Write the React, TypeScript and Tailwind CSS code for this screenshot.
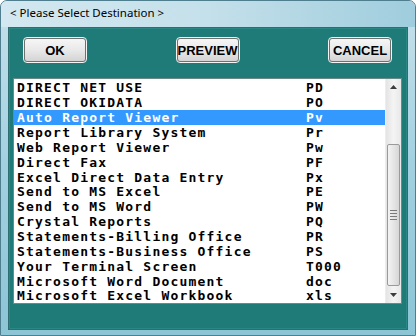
const destinations: [string, string][] = [
  ["DIRECT NET USE", "PD"],
  ["DIRECT OKIDATA", "PO"],
  ["Auto Report Viewer", "Pv"],
  ["Report Library System", "Pr"],
  ["Web Report Viewer", "Pw"],
  ["Direct Fax", "PF"],
  ["Excel Direct Data Entry", "Px"],
  ["Send to MS Excel", "PE"],
  ["Send to MS Word", "PW"],
  ["Crystal Reports", "PQ"],
  ["Statements-Billing Office", "PR"],
  ["Statements-Business Office", "PS"],
  ["Your Terminal Screen", "T000"],
  ["Microsoft Word Document", "doc"],
  ["Microsoft Excel Workbook", "xls"],
];

const selected = 2;

function DlgButton({ label }: { label: string }) {
  return (
    <button className="w-[62px] h-[24px] rounded-[3px] border border-[#707070] outline outline-1 outline-[#f4f4f4] bg-gradient-to-b from-[#f6f6f6] via-[#e9e9e9] to-[#d4d4d4] text-[13px] font-bold text-black font-['Liberation_Sans',Arial,sans-serif] leading-none">
      {label}
    </button>
  );
}

function ScrollBar() {
  return (
    <div className="w-[16px] h-full flex flex-col bg-gradient-to-r from-[#e4e4e4] via-[#f4f4f4] to-[#e8e8e8] border-l border-[#ededed]">
      <div className="h-[17px] flex items-center justify-center">
        <svg width="7" height="4" viewBox="0 0 7 4"><path d="M0 4 L3.5 0 L7 4 Z" fill="#3c3c3c" /></svg>
      </div>
      <div className="flex-1 flex flex-col pt-[48px] pb-[1px]">
        <div className="h-[142px] mx-[1px] rounded-[2px] border border-[#9a9a9a] bg-gradient-to-r from-[#f3f3f3] via-[#e6e6e6] to-[#d6d6d6] flex flex-col items-center justify-center gap-[2px]">
          <div className="w-[7px] h-[1px] bg-[#7a7a7a]" />
          <div className="w-[7px] h-[1px] bg-[#7a7a7a]" />
          <div className="w-[7px] h-[1px] bg-[#7a7a7a]" />
          <div className="w-[7px] h-[1px] bg-[#7a7a7a]" />
        </div>
      </div>
      <div className="h-[17px] flex items-center justify-center">
        <svg width="7" height="4" viewBox="0 0 7 4"><path d="M0 0 L3.5 4 L7 0 Z" fill="#3c3c3c" /></svg>
      </div>
    </div>
  );
}

export default function App() {
  return (
    <div className="w-[416px] h-[336px] flex flex-col rounded-t-[7px] bg-gradient-to-b from-[#c6e1eb] via-[#a2d0e0] to-[#8cc5d6] border border-[#4f7f8f] overflow-hidden">
      <div className="h-[26px] flex items-center pl-[9px] bg-gradient-to-r from-[#d3e8f0] via-[#c4e0ea] to-[#9fcddd]">
        <span className="text-[11.5px] text-black font-['Noto_Sans',Arial,sans-serif] leading-none pb-[2px]">
          &lt; Please Select Destination &gt;
        </span>
      </div>
      <div className="flex-1 flex px-[7px] pb-[5px]">
        <div className="flex-1 flex flex-col bg-[#1f7b78] border border-[#2e6e70] shadow-[inset_0_0_0_1px_#2a8784]">
          <div className="flex justify-between items-center pl-[15px] pr-[16px] pt-[10px]">
            <DlgButton label="OK" />
            <DlgButton label="PREVIEW" />
            <DlgButton label="CANCEL" />
          </div>
          <div className="mt-[16px] ml-[4px] mr-[5px] h-[226px] flex bg-white border border-[#6a8a8a]">
            <div className="flex-1 flex flex-col pt-[1px]">
              {destinations.map(([name, code], i) => (
                <div
                  key={code}
                  className={
                    "h-[15px] flex items-center pl-[3px] pt-[1px] text-[13px] font-bold tracking-[1.2px] leading-none font-['DejaVu_Sans_Mono','Liberation_Mono',monospace] " +
                    (i === selected ? "bg-[#3399ff] text-white" : "text-black")
                  }
                >
                  <span className="w-[289px] whitespace-pre">{name}</span>
                  <span>{code}</span>
                </div>
              ))}
            </div>
            <ScrollBar />
          </div>
        </div>
      </div>
    </div>
  );
}
